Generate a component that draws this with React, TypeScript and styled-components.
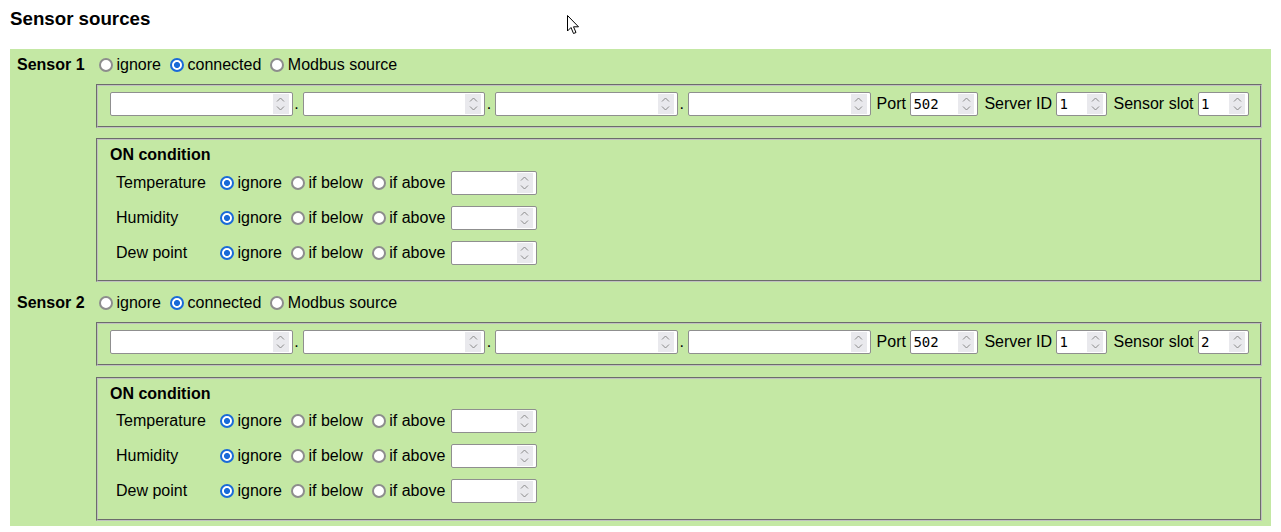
import React from 'react';
import styled, { createGlobalStyle } from 'styled-components';

const GlobalStyle = createGlobalStyle`
  html, body {
    margin: 0;
    background: #ffffff;
  }
  body {
    padding: 8px 10px 0;
    font-family: "Liberation Sans", Arial, sans-serif;
    font-size: 16px;
    color: #000;
  }
`;

const Page = styled.div`
  position: relative;
`;

const Title = styled.h3`
  margin: 0 0 19px;
  font-size: 18.72px;
  font-weight: 700;
  line-height: 21.5px;
`;

const Panel = styled.div`
  background: #c4e8a4;
  padding: 0 7px;
`;

const SensorBlock = styled.div`
  display: grid;
  grid-template-columns: 77px 1fr;
  padding: 6px 0 5px;
`;

const SensorName = styled.div`
  font-weight: 700;
  height: 20px;
  line-height: 20px;
`;

const SensorBody = styled.div`
  display: flex;
  flex-direction: column;
  min-width: 0;
`;

const Choices = styled.div`
  display: flex;
  align-items: center;
  gap: 4px;
  height: 20px;
`;

const Choice = styled.label`
  display: inline-flex;
  align-items: center;
  white-space: nowrap;
`;

const Radio = styled.input.attrs({ type: 'radio' })`
  -webkit-appearance: none;
  appearance: none;
  box-sizing: border-box;
  width: 14px;
  min-width: 14px;
  height: 14px;
  margin: 0 3.5px 0 5px;
  padding: 0;
  border: 2px solid #8d8d8d;
  border-radius: 50%;
  background: #fff;
  flex: none;

  &:checked {
    border: 2px solid #1a6ad8;
    background: radial-gradient(circle, #1a6ad8 0 2.7px, #fff 3.3px);
  }
`;

const Box = styled.fieldset<{ $gap: number }>`
  margin: ${(p) => p.$gap}px 2px 0;
  padding: 6px 11px 10px 12px;
  border: 2px groove #c0c0c0;
  min-width: 0;
`;

const AddressRow = styled.div`
  display: flex;
  align-items: center;
`;

const Field = styled.span<{ $w?: number; $ml?: number }>`
  position: relative;
  display: flex;
  height: 24px;
  margin-left: ${(p) => p.$ml ?? 0}px;
  ${(p) => (p.$w ? `width: ${p.$w}px; flex: none;` : 'flex: 1 1 0; min-width: 0;')}
`;

const NumberInput = styled.input.attrs({ type: 'number' })`
  -webkit-appearance: none;
  -moz-appearance: textfield;
  appearance: textfield;
  box-sizing: border-box;
  width: 100%;
  height: 24px;
  margin: 0;
  padding: 1px 2px;
  border: 1px solid #8f8f8f;
  border-radius: 2px;
  font-family: "DejaVu Sans Mono", "Liberation Mono", monospace;
  font-size: 14px;
  background: #fff;
  color: #000;
  outline: none;

  &::-webkit-inner-spin-button,
  &::-webkit-outer-spin-button {
    -webkit-appearance: none;
    margin: 0;
  }
`;

const Spin = styled.span`
  position: absolute;
  top: 2px;
  bottom: 2px;
  right: 4px;
  width: 16px;
  background: #e9e9ed;
  display: flex;
  align-items: center;
  justify-content: center;
  pointer-events: none;
`;

const Dot = styled.span`
  width: 10px;
  padding-left: 1.5px;
  box-sizing: border-box;
`;

const FieldLabel = styled.span`
  margin: 0 4.5px 0 6px;
  white-space: nowrap;
`;

const Heading = styled.div`
  font-weight: 700;
  line-height: 17px;
  padding-bottom: 2px;
`;

const CondRow = styled.div`
  display: flex;
  align-items: center;
  height: 35px;
`;

const CondName = styled.span`
  width: 105px;
  padding-left: 6px;
  box-sizing: border-box;
`;

const CondOptions = styled.div`
  display: flex;
  align-items: center;
  gap: 4px;
`;

const Cursor = styled.svg`
  position: absolute;
  left: 557px;
  top: 7px;
`;

const NumberField = ({ w, ml, value }: { w?: number; ml?: number; value?: number }) => (
  <Field $w={w} $ml={ml}>
    <NumberInput defaultValue={value} />
    <Spin>
      <svg width="9" height="14" viewBox="0 0 9 14">
        <path d="M1 4.5 L4.5 1 L8 4.5 M1 9.5 L4.5 13 L8 9.5" fill="none" stroke="#8a8a8a" strokeWidth="1" />
      </svg>
    </Spin>
  </Field>
);

type SensorProps = { index: number; slot: number };

const conditions = ['Temperature', 'Humidity', 'Dew point'];

const Sensor = ({ index, slot }: SensorProps) => {
  const name = `s${index}`;
  return (
    <SensorBlock>
      <SensorName>Sensor {index}</SensorName>
      <SensorBody>
        <Choices>
          <Choice>
            <Radio name={`${name}-mode`} />
            ignore
          </Choice>
          <Choice>
            <Radio name={`${name}-mode`} defaultChecked />
            connected
          </Choice>
          <Choice>
            <Radio name={`${name}-mode`} />
            Modbus source
          </Choice>
        </Choices>

        <Box $gap={9}>
          <AddressRow>
            <NumberField />
            <Dot>.</Dot>
            <NumberField />
            <Dot>.</Dot>
            <NumberField />
            <Dot>.</Dot>
            <NumberField />
            <FieldLabel>Port</FieldLabel>
            <NumberField w={68} value={502} />
            <FieldLabel>Server ID</FieldLabel>
            <NumberField w={51} value={1} />
            <FieldLabel>Sensor slot</FieldLabel>
            <NumberField w={51} value={slot} />
          </AddressRow>
        </Box>

        <Box $gap={10.5}>
          <Heading>ON condition</Heading>
          {conditions.map((c) => (
            <CondRow key={c}>
              <CondName>{c}</CondName>
              <CondOptions>
                <Choice>
                  <Radio name={`${name}-${c}`} defaultChecked />
                  ignore
                </Choice>
                <Choice>
                  <Radio name={`${name}-${c}`} />
                  if below
                </Choice>
                <Choice>
                  <Radio name={`${name}-${c}`} />
                  if above
                </Choice>
                <NumberField w={86} ml={1.5} />
              </CondOptions>
            </CondRow>
          ))}
        </Box>
      </SensorBody>
    </SensorBlock>
  );
};

export default function App() {
  return (
    <Page>
      <GlobalStyle />
      <Title>Sensor sources</Title>
      <Panel>
        <Sensor index={1} slot={1} />
        <Sensor index={2} slot={2} />
      </Panel>
      <Cursor width="13" height="20" viewBox="0 0 13 20">
        <path
          d="M0.5 0.5 L0.5 16 L4 12.5 L6.5 18.5 L9 17.5 L6.5 11.8 L11.5 11.8 Z"
          fill="#fff"
          stroke="#000"
          strokeWidth="1"
          strokeLinejoin="round"
        />
      </Cursor>
    </Page>
  );
}
